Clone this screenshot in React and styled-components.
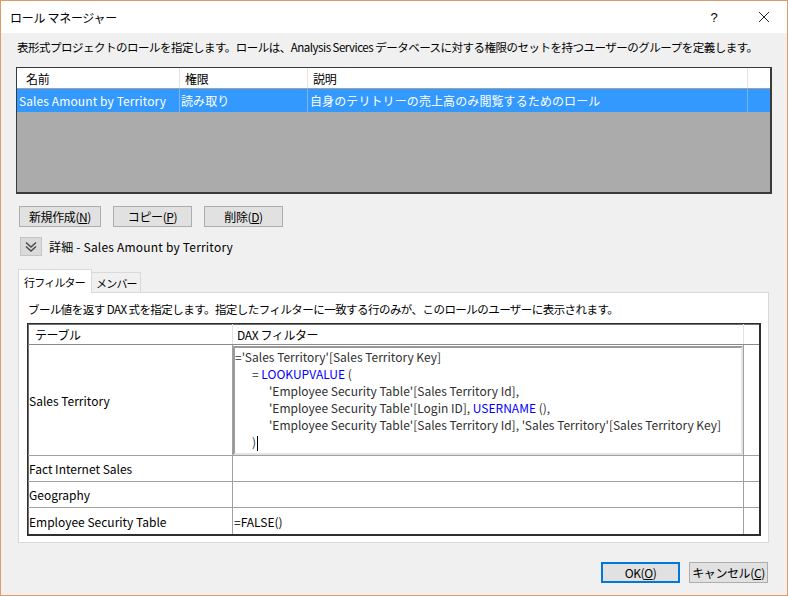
import React from "react";
import styled, { createGlobalStyle } from "styled-components";

const GlobalStyle = createGlobalStyle`
  html, body {
    margin: 0;
    padding: 0;
    background: #ffffff;
  }
  * {
    box-sizing: border-box;
  }
`;

const UI_FONT = `"Noto Sans CJK JP", "Noto Sans", sans-serif`;

const roles = [
  {
    id: 1,
    name: "Sales Amount by Territory",
    permission: "読み取り",
    description: "自身のテリトリーの売上高のみ閲覧するためのロール",
  },
];

const filters = [
  { id: 1, table: "Sales Territory", code: true },
  { id: 2, table: "Fact Internet Sales", value: "" },
  { id: 3, table: "Geography", value: "" },
  { id: 4, table: "Employee Security Table", value: "=FALSE()" },
];

const App = () => {
  return (
    <>
      <GlobalStyle />
      <Window>
        <TitleBar>
          <Title>ロール マネージャー</Title>
          <TitleControls>
            <HelpMark>?</HelpMark>
            <CloseMark>
              <svg width="12" height="12" viewBox="0 0 12 12">
                <path d="M1 1 L11 11 M11 1 L1 11" stroke="#222" strokeWidth="1" fill="none" />
              </svg>
            </CloseMark>
          </TitleControls>
        </TitleBar>

        <Body>
          <Description>
            表形式プロジェクトのロールを指定します。ロールは、Analysis Services
            データベースに対する権限のセットを持つユーザーのグループを定義します。
          </Description>

          <RoleList>
            <RoleRow $header>
              <RoleCell $header $pad={9}>名前</RoleCell>
              <RoleCell $header $pad={5}>権限</RoleCell>
              <RoleCell $header $pad={5}>説明</RoleCell>
              <RoleCell $header />
            </RoleRow>
            {roles.map((role) => (
              <RoleRow key={role.id} $selected>
                <RoleCell $selected $pad={2}>{role.name}</RoleCell>
                <RoleCell $selected $pad={1}>{role.permission}</RoleCell>
                <RoleCell $selected $pad={2}>{role.description}</RoleCell>
                <RoleCell $selected />
              </RoleRow>
            ))}
          </RoleList>

          <ButtonRow>
            <Button $width={82}>
              新規作成(<u>N</u>)
            </Button>
            <Button $width={79}>
              コピー(<u>P</u>)
            </Button>
            <Button $width={79}>
              削除(<u>D</u>)
            </Button>
          </ButtonRow>

          <Expander>
            <ExpandButton>
              <svg width="14" height="12" viewBox="0 0 14 12">
                <path
                  d="M2 1.5 L7 6 L12 1.5 M2 5.5 L7 10 L12 5.5"
                  stroke="#4a4a4a"
                  strokeWidth="1.5"
                  fill="none"
                />
              </svg>
            </ExpandButton>
            <ExpanderLabel>詳細 - Sales Amount by Territory</ExpanderLabel>
          </Expander>

          <Tabs>
            <Tab $active>行フィルター</Tab>
            <Tab>メンバー</Tab>
          </Tabs>

          <TabPanel>
            <PanelText>
              ブール値を返す DAX 式を指定します。指定したフィルターに一致する行のみが、このロールのユーザーに表示されます。
            </PanelText>

            <FilterGrid>
              <FilterRow $header>
                <FilterCell $header>テーブル</FilterCell>
                <FilterCell $header $pad={4}>DAX フィルター</FilterCell>
                <FilterCell $header $last />
              </FilterRow>
              {filters.map((f) => (
                <FilterRow key={f.id} $tall={f.code}>
                  <FilterCell $pad={1}>{f.table}</FilterCell>
                  {f.code ? (
                    <EditorCell>
                      <Editor>
                        <CodeLine>='Sales Territory'[Sales Territory Key]</CodeLine>
                        <CodeLine $indent={17}>
                          = <Keyword>LOOKUPVALUE</Keyword> (
                        </CodeLine>
                        <CodeLine $indent={34}>
                          'Employee Security Table'[Sales Territory Id],
                        </CodeLine>
                        <CodeLine $indent={34}>
                          'Employee Security Table'[Login ID], <Keyword>USERNAME</Keyword> (),
                        </CodeLine>
                        <CodeLine $indent={34}>
                          'Employee Security Table'[Sales Territory Id], 'Sales Territory'[Sales Territory Key]
                        </CodeLine>
                        <CodeLine $indent={17}>
                          )<Caret />
                        </CodeLine>
                      </Editor>
                    </EditorCell>
                  ) : (
                    <FilterCell $pad={1}>{f.value}</FilterCell>
                  )}
                  <FilterCell $last />
                </FilterRow>
              ))}
            </FilterGrid>
          </TabPanel>

          <Footer>
            <Button $width={79} $default>
              OK(<u>O</u>)
            </Button>
            <Button $width={79}>
              キャンセル(<u>C</u>)
            </Button>
          </Footer>
        </Body>
      </Window>
    </>
  );
};

export default App;

// styled-components
const Window = styled.div`
  width: 788px;
  height: 596px;
  border: 1px solid #e29a66;
  display: flex;
  flex-direction: column;
  font-family: ${UI_FONT};
  font-size: 12px;
  color: #000;
  overflow: hidden;
`;

const TitleBar = styled.div`
  height: 32px;
  flex: none;
  background: #ffffff;
  display: flex;
  align-items: center;
  justify-content: space-between;
  padding-left: 9px;
`;

const Title = styled.span`
  font-size: 12px;
  letter-spacing: -0.3px;
`;

const TitleControls = styled.div`
  display: flex;
  align-items: center;
  height: 100%;
`;

const HelpMark = styled.span`
  width: 46px;
  text-align: center;
  font-family: "Liberation Sans", sans-serif;
  font-size: 13px;
  margin-right: 4px;
`;

const CloseMark = styled.span`
  width: 46px;
  display: flex;
  justify-content: center;
  align-items: center;
`;

const Body = styled.div`
  flex: 1;
  background: #f0f0f0;
  padding: 6px 15px 0 15px;
  display: flex;
  flex-direction: column;
`;

const Description = styled.div`
  line-height: 16px;
  white-space: nowrap;
  font-size: 11.5px;
  letter-spacing: -0.5px;
  padding-left: 1px;
`;

const RoleList = styled.div`
  margin-top: 12px;
  height: 127px;
  background: #ababab;
  border: 1px solid #3a3a3a;
  border-right-width: 2px;
  border-bottom-width: 2px;
`;

const RoleRow = styled.div`
  display: grid;
  grid-template-columns: 163px 128px 440px 1fr;
  height: ${(p) => (p.$header ? "21px" : "23px")};
  background: ${(p) => (p.$selected ? "#3399ff" : "#ffffff")};
  border-bottom: ${(p) => (p.$header ? "1px solid #a0a0a0" : "none")};
`;

const RoleCell = styled.div`
  display: flex;
  align-items: center;
  padding-left: ${(p) => p.$pad || 0}px;
  color: ${(p) => (p.$selected ? "#ffffff" : "#000000")};
  border-right: 1px solid ${(p) => (p.$selected ? "#7ab8f5" : "#e5e5e5")};
  white-space: nowrap;
  overflow: hidden;
  letter-spacing: ${(p) => (p.$selected ? "0.1px" : "-0.2px")};

  &:last-child {
    border-right: none;
  }
`;

const ButtonRow = styled.div`
  display: flex;
  gap: 12px;
  margin-top: 12px;
  padding-left: 3px;
`;

const Button = styled.button`
  width: ${(p) => p.$width}px;
  height: 21px;
  padding: 0;
  background: #e1e1e1;
  border: 1px solid ${(p) => (p.$default ? "#0078d7" : "#adadad")};
  box-shadow: ${(p) => (p.$default ? "inset 0 0 0 1px #0078d7" : "none")};
  font-family: ${UI_FONT};
  font-size: 12px;
  letter-spacing: -0.4px;
  color: #000;
  display: flex;
  align-items: center;
  justify-content: center;

  u {
    text-decoration: underline;
    text-underline-offset: 1px;
  }
`;

const Expander = styled.div`
  display: flex;
  align-items: center;
  gap: 7px;
  margin-top: 10px;
  padding-left: 4px;
`;

const ExpandButton = styled.div`
  width: 22px;
  height: 19px;
  background: #dadada;
  border: 1px solid #c4c4c4;
  display: flex;
  align-items: center;
  justify-content: center;
`;

const ExpanderLabel = styled.span`
  letter-spacing: 0.2px;
`;

const Tabs = styled.div`
  display: flex;
  align-items: flex-end;
  margin-top: 13px;
  padding-left: 2px;
  height: 24px;
  position: relative;
  z-index: 1;
  margin-bottom: -1px;
`;

const Tab = styled.div`
  height: ${(p) => (p.$active ? "24px" : "21px")};
  padding: 0 ${(p) => (p.$active ? "6px" : "3px")} 0 ${(p) => (p.$active ? "5px" : "4px")};
  background: ${(p) => (p.$active ? "#ffffff" : "#f0f0f0")};
  border: 1px solid #d9d9d9;
  border-bottom: ${(p) => (p.$active ? "none" : "1px solid #d9d9d9")};
  border-left: ${(p) => (p.$active ? "1px solid #d9d9d9" : "none")};
  display: flex;
  align-items: center;
  font-size: 11px;
  letter-spacing: -0.8px;
`;

const TabPanel = styled.div`
  margin-left: 2px;
  margin-right: 3px;
  background: #ffffff;
  border: 1px solid #d9d9d9;
  padding: 8px 7px 6px 8px;
`;

const PanelText = styled.div`
  line-height: 16px;
  padding-left: 1px;
  white-space: nowrap;
  font-size: 11.5px;
  letter-spacing: -0.55px;
`;

const FilterGrid = styled.div`
  margin-top: 6px;
  border: 2px solid #2e2e2e;
  border-top-width: 1px;
  border-left-width: 1px;
  box-shadow: inset 1px 1px 0 #6d6d6d;
  background: #ffffff;
`;

const FilterRow = styled.div`
  display: grid;
  grid-template-columns: 205px 511px 1fr;
  height: ${(p) => (p.$header ? "21px" : p.$tall ? "111px" : "26px")};
  border-bottom: 1px solid ${(p) => (p.$header ? "#8a8a8a" : "#a0a0a0")};

  &:last-child {
    border-bottom: none;
  }
`;

const FilterCell = styled.div`
  display: flex;
  align-items: center;
  padding-left: ${(p) => p.$pad ?? 7}px;
  border-right: 1px solid ${(p) => (p.$header ? "#e3e3e3" : "#a0a0a0")};
  white-space: nowrap;
  overflow: hidden;
  letter-spacing: ${(p) => (p.$header ? "-0.4px" : "0")};
  font-size: 12px;

  &:last-child {
    border-right: none;
  }
`;

const EditorCell = styled.div`
  border-right: 1px solid #a0a0a0;
  padding: 1px 0 0 0;
  display: flex;
`;

const Editor = styled.div`
  flex: 1;
  height: 109px;
  border-top: 2px solid #9a9a9a;
  border-left: 2px solid #9a9a9a;
  border-right: 2px solid #e3e3e3;
  border-bottom: 2px solid #e3e3e3;
  padding-top: 0;
  font-size: 12px;
  color: #303030;
`;

const CodeLine = styled.div`
  height: 17px;
  line-height: 17px;
  padding-left: ${(p) => p.$indent || 0}px;
  white-space: pre;
  letter-spacing: 0;
`;

const Keyword = styled.span`
  color: #0000ff;
`;

const Caret = styled.span`
  display: inline-block;
  width: 1px;
  height: 15px;
  background: #000;
  vertical-align: middle;
  margin-left: 1px;
`;

const Footer = styled.div`
  display: flex;
  justify-content: flex-end;
  gap: 9px;
  margin-top: 19px;
  padding-right: 4px;
`;
